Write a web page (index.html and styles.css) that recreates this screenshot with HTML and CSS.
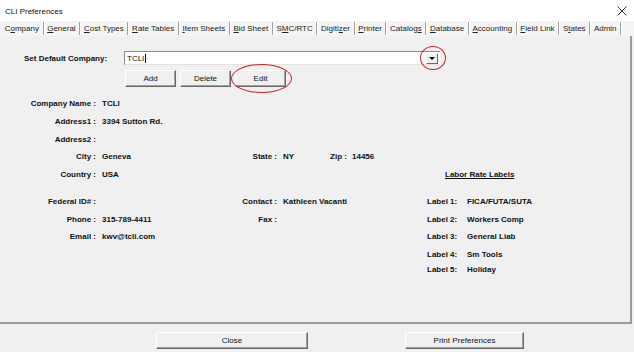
FILE: index.html
```html
<!DOCTYPE html>
<html lang="en">
<head>
    <meta charset="UTF-8">
    <title>CLI Preferences</title>
    <link rel="stylesheet" href="styles.css">
</head>
<body>
    <div class="titlebar">
        <span class="title">CLI Preferences</span>
        <svg class="close-x" width="10" height="10" viewBox="0 0 10 10">
            <path d="M0.5 0.5 L9.5 9.5 M9.5 0.5 L0.5 9.5" stroke="#333" stroke-width="1" fill="none"/>
        </svg>
    </div>

    <div class="tabs">
        <div class="tab">C<u>o</u>mpany</div>
        <div class="tab"><u>G</u>eneral</div>
        <div class="tab"><u>C</u>ost Types</div>
        <div class="tab"><u>R</u>ate Tables</div>
        <div class="tab"><u>I</u>tem Sheets</div>
        <div class="tab"><u>B</u>id Sheet</div>
        <div class="tab">S<u>M</u>C/RTC</div>
        <div class="tab">Digiti<u>z</u>er</div>
        <div class="tab"><u>P</u>rinter</div>
        <div class="tab">Catalog<u>s</u></div>
        <div class="tab"><u>D</u>atabase</div>
        <div class="tab"><u>A</u>ccounting</div>
        <div class="tab"><u>F</u>ield Link</div>
        <div class="tab">S<u>t</u>ates</div>
        <div class="tab">Admin</div>
    </div>

    <div class="panel">
        <div class="company-row">
            <label class="set-label">Set Default Company:</label>
            <div class="combo">
                <span class="combo-text">TCLI<span class="caret"></span></span>
                <span class="combo-btn"><span class="arrow"></span></span>
            </div>
        </div>

        <div class="btn-row">
            <button class="btn small">Add</button>
            <button class="btn small">Delete</button>
            <button class="btn small">Edit</button>
        </div>

        <div class="info">
            <!-- row 1 -->
            <div class="lbl c1">Company Name :</div><div class="val c2">TCLI</div>
            <!-- row 2 -->
            <div class="lbl c1 r2">Address1 :</div><div class="val c2 r2 wide">3394 Sutton Rd.</div>
            <!-- row 3 -->
            <div class="lbl c1 r3">Address2 :</div>
            <!-- row 4 -->
            <div class="lbl c1 r4">City :</div><div class="val c2 r4">Geneva</div>
            <div class="lbl c3 r4">State :</div><div class="val c4 r4">NY</div>
            <div class="lbl c5 r4">Zip :</div><div class="val c6 r4">14456</div>
            <!-- row 5 -->
            <div class="lbl c1 r5">Country :</div><div class="val c2 r5">USA</div>
            <div class="val labor-head r5">Labor Rate Labels</div>
            <!-- row 7 -->
            <div class="lbl c1 r7">Federal ID# :</div>
            <div class="lbl c3 r7">Contact :</div><div class="val c4 r7 span3">Kathleen Vacanti</div>
            <div class="val c7 r7">Label 1:</div><div class="val c8 r7">FICA/FUTA/SUTA</div>
            <!-- row 8 -->
            <div class="lbl c1 r8">Phone :</div><div class="val c2 r8">315-789-4411</div>
            <div class="lbl c3 r8">Fax :</div>
            <div class="val c7 r8">Label 2:</div><div class="val c8 r8">Workers Comp</div>
            <!-- row 9 -->
            <div class="lbl c1 r9">Email :</div><div class="val c2 r9">kwv@tcli.com</div>
            <div class="val c7 r9">Label 3:</div><div class="val c8 r9">General Liab</div>
            <!-- row 10 -->
            <div class="val c7 r10">Label 4:</div><div class="val c8 r10">Sm Tools</div>
            <!-- row 11 -->
            <div class="val c7 r11">Label 5:</div><div class="val c8 r11">Holiday</div>
        </div>

        <!-- red annotation marks -->
        <div class="mark mark-combo"></div>
        <div class="mark mark-edit"></div>
    </div>

    <div class="footer">
        <button class="btn close-btn">Close</button>
        <button class="btn print-btn">Print Preferences</button>
    </div>
</body>
</html>
```

FILE: styles.css
```css
* { margin: 0; padding: 0; box-sizing: border-box; }
body {
    font-family: "Liberation Sans", Arial, sans-serif;
    font-size: 8px;
    color: #111;
    background: #f0f0f0;
    width: 634px;
    height: 352px;
    overflow: hidden;
}

.titlebar {
    height: 21px;
    background: #fff;
    display: flex;
    align-items: center;
    justify-content: space-between;
    padding: 1px 7px 0 5px;
}

.title {
    font-size: 8px;
    color: #111;
}

.tabs {
    height: 15px;
    display: flex;
    align-items: center;
    padding-left: 1px;
    background: #f5f5f5;
}

.tab {
    padding: 0 3.65px;
    height: 13px;
    line-height: 13px;
    border-right: 1px solid #a0a0a0;
    box-shadow: 1px 0 0 #fff;
    color: #222;
    white-space: nowrap;
}

.panel {
    position: relative;
    height: 288px;
    width: 632px;
    padding-top: 15px;
    border-right: 2px solid #9a9a9a;
    border-bottom: 2px solid #9a9a9a;
}

.company-row {
    display: flex;
    align-items: center;
    height: 14px;
    padding-left: 24px;
}

.set-label {
    width: 100px;
    font-weight: bold;
}

.combo {
    width: 316px;
    height: 14px;
    background: #fff;
    border-top: 1px solid #8a8a8a;
    border-left: 1px solid #8a8a8a;
    border-bottom: 1px solid #e3e3e3;
    display: flex;
    align-items: center;
    justify-content: space-between;
    padding-left: 2px;
}

.combo-text {
    display: flex;
    align-items: center;
}

.caret {
    display: inline-block;
    width: 1px;
    height: 9px;
    background: #000;
    margin-left: 1px;
}

.combo-btn {
    width: 12px;
    height: 11px;
    margin-right: 2px;
    background: #f0f0f0;
    border: 1px solid;
    border-color: #fff #696969 #696969 #fff;
    display: flex;
    align-items: center;
    justify-content: center;
}

.arrow {
    width: 0;
    height: 0;
    border-left: 3px solid transparent;
    border-right: 3px solid transparent;
    border-top: 3px solid #000;
}

.btn-row {
    display: flex;
    gap: 4px;
    margin-top: 5px;
    padding-left: 125px;
}

.btn {
    font-family: "Liberation Sans", Arial, sans-serif;
    font-size: 8px;
    color: #111;
    background: #f0f0f0;
    border: 1px solid;
    border-color: #fff #696969 #696969 #fff;
    box-shadow: inset -1px -1px 0 #a0a0a0;
    height: 17px;
}

.btn.small {
    width: 51px;
}

.info {
    display: grid;
    grid-template-columns: 102px 98px 83px 22px 47px 75px 40px 1fr;
    grid-template-rows: 18px 18px 18px 17px 18px 9px 18px 18px 17px 18px 12px;
    align-items: center;
    margin-top: 7px;
    font-weight: bold;
}

.lbl {
    text-align: right;
    padding-right: 6px;
    white-space: nowrap;
}

.val {
    white-space: nowrap;
}

.c1 { grid-column: 1; }
.c2 { grid-column: 2; }
.c3 { grid-column: 3; }
.c4 { grid-column: 4; }
.c5 { grid-column: 5; padding-right: 5px; }
.c6 { grid-column: 6; }
.c7 { grid-column: 7; }
.c8 { grid-column: 8; }

.wide { grid-column: 2 / span 2; }
.span3 { grid-column: 4 / span 3; }

.r2 { grid-row: 2; }
.r3 { grid-row: 3; }
.r4 { grid-row: 4; }
.r5 { grid-row: 5; }
.r7 { grid-row: 7; }
.r8 { grid-row: 8; }
.r9 { grid-row: 9; }
.r10 { grid-row: 10; }
.r11 { grid-row: 11; }

.labor-head {
    grid-column: 7 / span 2;
    padding-left: 18px;
    text-decoration: underline;
}

.mark {
    position: absolute;
    border: 1.5px solid #c8242c;
    border-radius: 50%;
}

.mark-combo {
    left: 420px;
    top: 10px;
    width: 26px;
    height: 24px;
}

.mark-edit {
    left: 231px;
    top: 28px;
    width: 61px;
    height: 29px;
}

.footer {
    display: flex;
    padding-top: 8px;
}

.close-btn {
    margin-left: 156px;
    width: 152px;
}

.print-btn {
    margin-left: 97px;
    width: 119px;
}
```
